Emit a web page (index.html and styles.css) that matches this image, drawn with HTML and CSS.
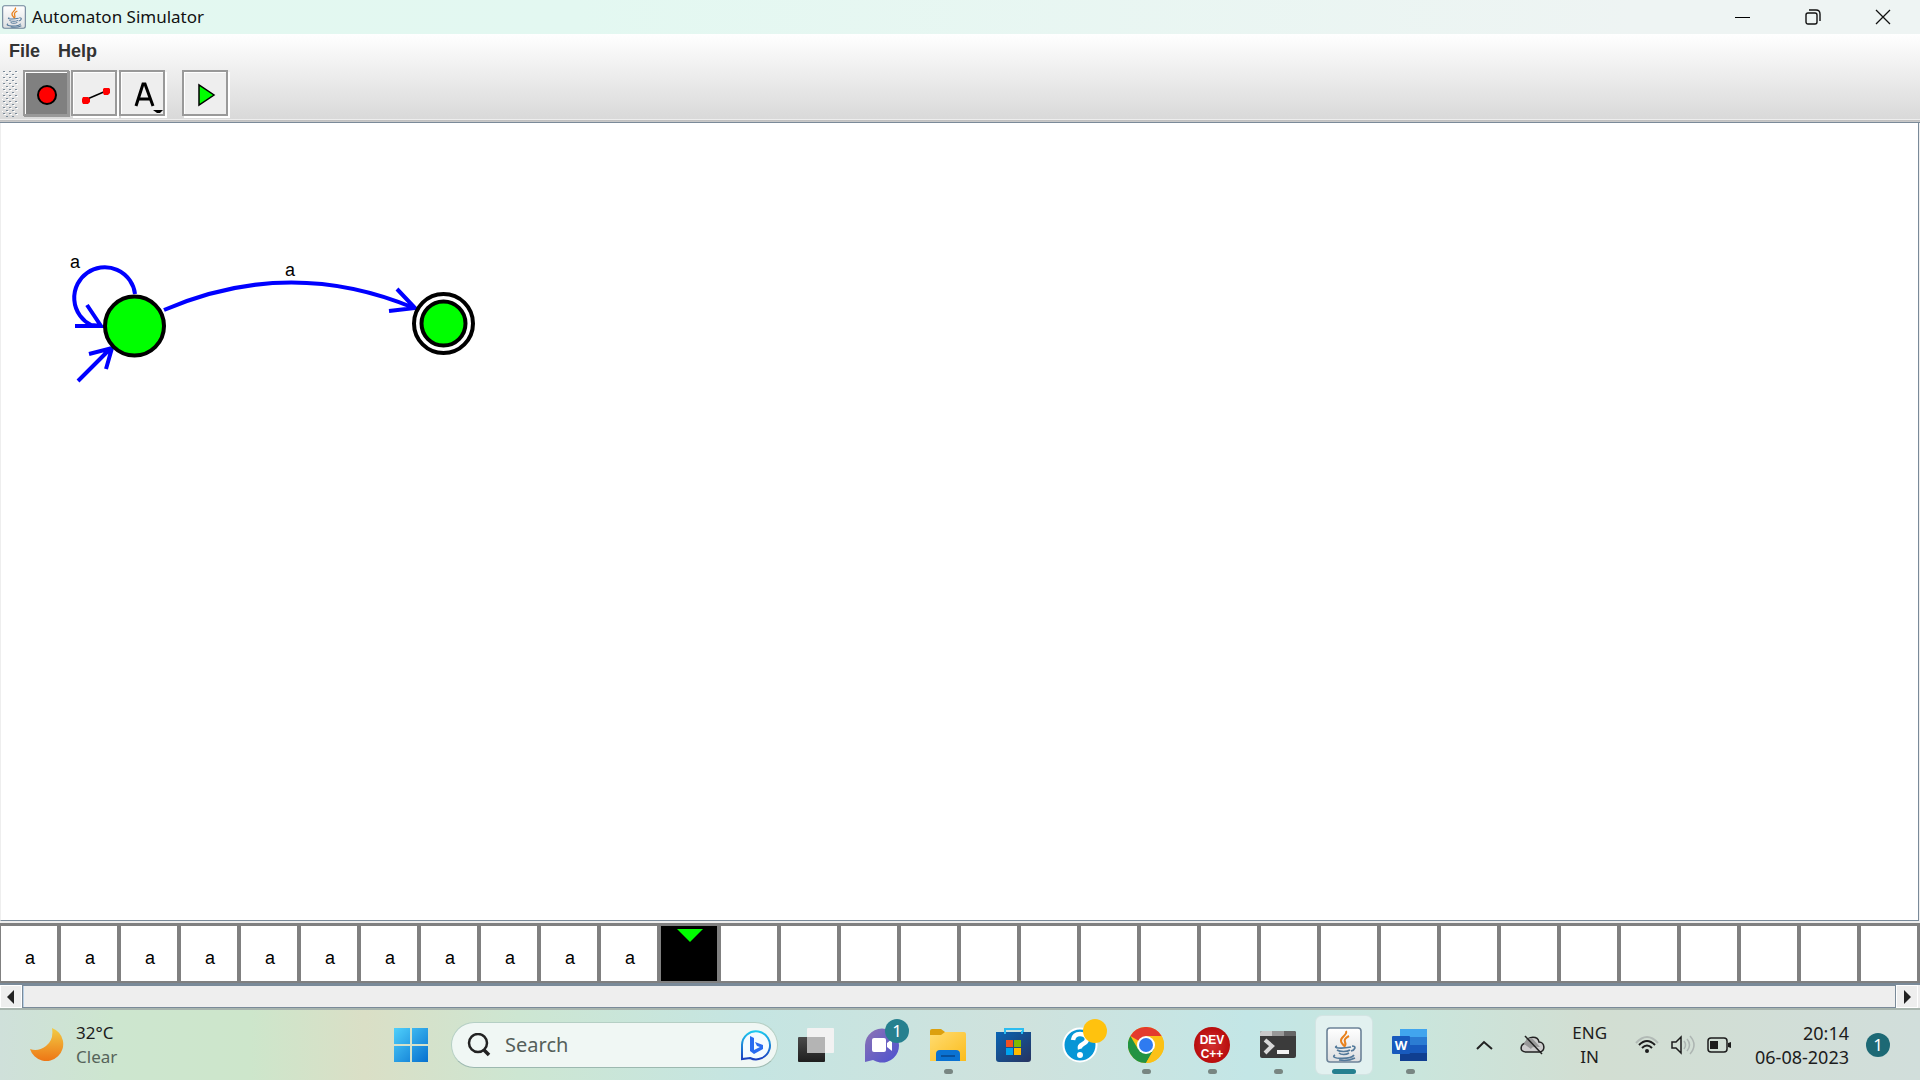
FILE: index.html
```html
<!DOCTYPE html>
<html lang="en">
<head>
<meta charset="utf-8">
<title>Automaton Simulator</title>
<link rel="stylesheet" href="styles.css">
</head>
<body>
<svg class="defs" aria-hidden="true">
  <defs>
    <linearGradient id="win" x1="0" y1="0" x2="1" y2="1"><stop offset="0" stop-color="#4fd0fb"/><stop offset="1" stop-color="#0670cf"/></linearGradient>
    <linearGradient id="moon" x1="0" y1="0" x2="0" y2="1"><stop offset="0" stop-color="#f2cc45"/><stop offset="1" stop-color="#ee7615"/></linearGradient>
    <linearGradient id="bing" x1="0" y1="0" x2="0" y2="1"><stop offset="0" stop-color="#1ec8ee"/><stop offset="1" stop-color="#1b3fc0"/></linearGradient>
    <linearGradient id="chat" x1="0" y1="0" x2="1" y2="1"><stop offset="0" stop-color="#8d74b4"/><stop offset="1" stop-color="#4b50d0"/></linearGradient>
    <linearGradient id="folder" x1="0" y1="0" x2="1" y2="1"><stop offset="0" stop-color="#ffdc72"/><stop offset="1" stop-color="#fbbc1c"/></linearGradient>
    <linearGradient id="store" x1="0" y1="0" x2="1" y2="1"><stop offset="0" stop-color="#0a64b4"/><stop offset="1" stop-color="#27335f"/></linearGradient>
    <linearGradient id="dark" x1="0" y1="0" x2="0" y2="1"><stop offset="0" stop-color="#4a4a4a"/><stop offset="1" stop-color="#1e1e1e"/></linearGradient>
    <linearGradient id="paper" x1="0" y1="0" x2="0" y2="1"><stop offset="0" stop-color="#fff"/><stop offset="1" stop-color="#dcdee0"/></linearGradient>
    <radialGradient id="dev"><stop offset="0" stop-color="#d23030"/><stop offset="1" stop-color="#b80c0c"/></radialGradient>
    <symbol id="java" viewBox="0 0 36 36">
      <rect x="1" y="1" width="34" height="34" rx="3" fill="url(#paper)" stroke="#6c8298" stroke-width="1.6"/>
      <path d="M20 4c2 4-6 6-5 10 0 2 2 3 3 5M23 9c-4 2-5 4-4 6s1 3-1 5" fill="none" stroke="#e8811c" stroke-width="2"/>
      <path d="M11 19c-5 2 4 3 14 1M11 23c3 2 10 2 13 0M13 26c2 2 7 2 10 0M9 28c-7 4 16 5 19 0M26 19c5 0 3 4-1 5M13 33c6 1 12 0 16-2" fill="none" stroke="#53799a" stroke-width="1.6"/>
    </symbol>
  </defs>
</svg>
<div class="screen">
  <header class="titlebar">
    <svg class="app-icon" viewBox="0 0 36 36" aria-hidden="true"><use href="#java"/></svg>
    <h1 class="title">Automaton Simulator</h1>
    <div class="window-buttons">
      <button class="winbtn" aria-label="Minimize"><svg width="16" height="16"><path d="M0 8.5h15" stroke="#000"/></svg></button>
      <button class="winbtn" aria-label="Restore"><svg width="16" height="16" fill="none" stroke="#111" stroke-width="1.4"><rect x="1" y="4" width="11" height="11" rx="2"/><path d="M4 1h7q4 0 4 4v7"/></svg></button>
      <button class="winbtn" aria-label="Close"><svg width="16" height="16"><path d="M1 1l14 14M15 1L1 15" stroke="#111" stroke-width="1.3"/></svg></button>
    </div>
  </header>

  <div class="chrome">
    <nav class="menubar">
      <button class="menu">File</button>
      <button class="menu">Help</button>
    </nav>
    <div class="toolbar" role="toolbar" aria-label="Tools">
      <svg class="grip" width="16" height="47" aria-hidden="true">
        <defs><pattern id="dots" width="6" height="6" patternUnits="userSpaceOnUse"><path d="M1 1h2v1H1zM4 4h2v1H4z" fill="#7a8a99"/><path d="M2 2h2v1H2zM5 5h1v1H5zM0 5h1v1H0z" fill="#fff"/></pattern></defs>
        <rect width="16" height="47" fill="url(#dots)"/>
      </svg>
      <button class="tool tool-on" aria-label="State" aria-pressed="true"><svg width="42" height="42"><circle cx="22" cy="21" r="9" fill="#f00" stroke="#000" stroke-width="2"/></svg></button>
      <button class="tool" aria-label="Transition"><svg width="42" height="42"><path d="M12 26L33 17" stroke="#000" stroke-width="1.500"/><path d="M10 23h5l2 2v3l-2 2h-5l-1-2v-3zM31 14h5l1 1v4l-2 2h-4l-1-2v-4z" fill="#f00"/></svg></button>
      <button class="tool" aria-label="Text"><svg width="42" height="42"><path d="M15 32L22 10h2l8 22M18 25h11" fill="none" stroke="#000" stroke-width="3"/><path d="M32 36h10l-3 3h-3z" fill="#000"/></svg></button>
      <button class="tool tool-run" aria-label="Run"><svg width="42" height="42"><path d="M15 11v20l15-10z" fill="#0f0" stroke="#000" stroke-width="1.500"/></svg></button>
    </div>
  </div>

  <main class="canvas">
    <svg class="diagram" width="600" height="400" role="img" aria-label="Automaton with two states">
      <g fill="none" stroke="#00f" stroke-width="4">
        <path d="M135 171A30.500 30.500 0 1 0 91 202L102 203M75 203h26L87 182"/>
        <path d="M78 258L111 225M89 231L112 225L106 246"/>
        <path d="M164 187Q289 133 414 185M389 188L415 185L397 166"/>
      </g>
      <g stroke="#000" stroke-width="4">
        <circle cx="134.500" cy="203" r="29.500" fill="#0f0"/>
        <circle cx="443.500" cy="200.500" r="29.500" fill="#fff"/>
        <circle cx="443.500" cy="200.500" r="22" fill="#0f0"/>
      </g>
      <text class="edge-label" x="70" y="145">a</text>
      <text class="edge-label" x="285" y="153">a</text>
    </svg>
  </main>

  <section class="tape" aria-label="Tape">
    <span class="cell">a</span><span class="cell">a</span><span class="cell">a</span><span class="cell">a</span><span class="cell">a</span><span class="cell">a</span><span class="cell">a</span><span class="cell">a</span><span class="cell">a</span><span class="cell">a</span><span class="cell">a</span><span class="cell head"><svg width="26" height="13"><path d="M0 0h26L13 13z" fill="#0f0"/></svg></span><span class="cell"></span><span class="cell"></span><span class="cell"></span><span class="cell"></span><span class="cell"></span><span class="cell"></span><span class="cell"></span><span class="cell"></span><span class="cell"></span><span class="cell"></span><span class="cell"></span><span class="cell"></span><span class="cell"></span><span class="cell"></span><span class="cell"></span><span class="cell"></span><span class="cell"></span><span class="cell"></span><span class="cell"></span><span class="cell"></span>
  </section>
  <div class="scrollbar">
    <button class="arrow" aria-label="Scroll left"><svg width="8" height="14"><path d="M7 0v14L0 7z" fill="#222"/></svg></button>
    <div class="thumb"></div>
    <button class="arrow" aria-label="Scroll right"><svg width="8" height="14"><path d="M1 0v14l7-7z" fill="#222"/></svg></button>
  </div>

  <footer class="taskbar">
    <div class="weather">
      <svg width="34" height="34" aria-hidden="true"><path d="M22 0A17 17 0 1 1 0 21Q8 24 16 18T22 0z" fill="url(#moon)"/></svg>
      <div><div>32°C</div><div class="muted">Clear</div></div>
    </div>
    <div class="dock">
      <button class="app start" aria-label="Start"><svg width="36" height="36"><path d="M1 1h16v16H1zM19 1h16v16H19zM1 19h16v16H1zM19 19h16v16H19z" fill="url(#win)"/></svg></button>
      <div class="search">
        <svg width="24" height="24" fill="none" stroke="#222" aria-hidden="true"><circle cx="11" cy="10" r="9" stroke-width="2.500"/><path d="M17 17l5 5" stroke-width="3.500"/></svg>
        <input class="search-box" type="text" placeholder="Search" aria-label="Search">
        <svg width="32" height="32" aria-hidden="true"><path d="M2 30V16A14 14 0 1 1 10 29z" fill="#f4fbff" stroke="url(#bing)" stroke-width="2"/><path d="M10 7l4 2v12l6-3-3-1-2-4 8 3v4l-9 5-4-3z" fill="#286bf0"/></svg>
      </div>
      <button class="app" aria-label="Task view"><svg width="36" height="36"><rect y="10" width="27" height="25" rx="1" fill="url(#dark)"/><rect x="9" y="1" width="27" height="25" rx="1" fill="#f2f2f2"/><path d="M9 10h18v16H9z" fill="#b4b4b4"/></svg></button>
      <button class="app" aria-label="Chat"><svg width="36" height="36"><path d="M1 35V18A17 17 0 1 1 9 33z" fill="url(#chat)"/><rect x="8" y="11" width="14" height="14" rx="2" fill="#fff"/><path d="M23 16l5-4v12l-5-4z" fill="#fff"/></svg><span class="badge">1</span></button>
      <button class="app" aria-label="File Explorer"><svg width="36" height="36"><path d="M0 4q0-2 2-2h9l4 3v6H0z" fill="#dca00f"/><path d="M0 8h11l4-3h19q2 0 2 2v27H0z" fill="url(#folder)"/><path d="M6 34v-7q0-4 4-4h16q4 0 4 4v7z" fill="#0a72d2"/><path d="M11 29h14" stroke="#07509c" stroke-width="2"/></svg><i class="dot"></i></button>
      <button class="app" aria-label="Microsoft Store"><svg width="36" height="36"><path d="M9 8V2h18v6" fill="none" stroke="#2bbcf0" stroke-width="2"/><path d="M0 5h35v27q0 3-3 3H3q-3 0-3-3z" fill="url(#store)"/><path d="M9 7V4M26 7V4" stroke="#2bbcf0" stroke-width="2"/><path d="M10 13h7v7h-7z" fill="#f25022"/><path d="M18 13h7v7h-7z" fill="#7fba00"/><path d="M10 21h7v7h-7z" fill="#00a4ef"/><path d="M18 21h7v7h-7z" fill="#ffb900"/></svg></button>
      <button class="app" aria-label="Get Help"><svg width="36" height="36"><circle cx="18" cy="18" r="16.500" fill="#0796d6" stroke="#fff" stroke-width="2"/><path d="M11 13q1-6 7-6t7 5q0 3-4 5t-3 5" fill="none" stroke="#fff" stroke-width="4.500"/><circle cx="18" cy="28" r="3" fill="#fff"/></svg><span class="badge badge-alert"></span></button>
      <button class="app" aria-label="Chrome"><svg width="36" height="36"><circle cx="18" cy="18" r="18" fill="#fbc116"/><path d="M18 18L2.400 9A18 18 0 0 1 33.600 9z" fill="#e33b2e"/><path d="M2.400 9A18 18 0 0 0 18 36L26 22 18 18 10 22z" fill="#229342"/><path d="M18 9h15.600A18 18 0 0 1 18 36L26 22z" fill="#fbc116"/><circle cx="18" cy="18" r="9" fill="#fff"/><circle cx="18" cy="18" r="7" fill="#2f7bf0"/></svg><i class="dot"></i></button>
      <button class="app" aria-label="Dev-C++"><svg width="36" height="36"><circle cx="18" cy="18" r="18" fill="url(#dev)"/><text class="dev-text" x="18" y="17">DEV</text><text class="dev-text" x="18" y="31">C++</text></svg><i class="dot"></i></button>
      <button class="app" aria-label="Command Prompt"><svg width="36" height="36"><rect y="4" width="36" height="27" rx="2" fill="#3b3b3b"/><path d="M0 9V6q0-2 2-2h10v5z" fill="#c9c9c9"/><path d="M12 4h12v5H12z" fill="#989898"/><path d="M24 4h10q2 0 2 2v3H24z" fill="#666"/><path d="M5 13l7 6-7 7" fill="none" stroke="#d8d8d8" stroke-width="4"/><path d="M17 23h12v4H17z" fill="#f2f2f2"/></svg><i class="dot"></i></button>
      <button class="app app-active" aria-label="Automaton Simulator"><svg width="36" height="36"><use href="#java"/></svg><i class="dot dot-active"></i></button>
      <button class="app" aria-label="Word"><svg width="36" height="36"><path d="M8 2h27v8H8z" fill="#41a5ee"/><path d="M8 10h27v8H8z" fill="#2b7cd3"/><path d="M8 18h27v8H8z" fill="#185abd"/><path d="M8 26h27v8H8z" fill="#103f91"/><rect y="9" width="18" height="18" rx="1" fill="#185abd"/><text class="word-text" x="9" y="23">W</text></svg><i class="dot"></i></button>
    </div>
    <div class="tray">
      <svg width="17" height="10" aria-hidden="true"><path d="M1 9l7-7 8 7" fill="none" stroke="#222" stroke-width="2"/></svg>
      <svg class="cloud" width="26" height="20" aria-hidden="true"><path d="M6 17C-1 17 0 9 6 8 8 0 18 1 19 7c6 0 7 10 0 10z" fill="#ccc" stroke="#222" stroke-width="1.500"/><path d="M4 9q2-7 8-6l8 9q-8-1-9 2z" fill="#999"/><path d="M5 1l17 18" stroke="#222" stroke-width="1.500"/></svg>
      <div class="lang"><div>ENG</div><div>IN</div></div>
      <svg class="wifi" width="24" height="20" fill="none" stroke="#1c1c1c" stroke-width="2" aria-hidden="true"><path d="M1 8q11-12 22 0" stroke="#b2bab6"/><path d="M4 10q8-8 16 0M7 13q5-5 10 0"/><circle cx="12" cy="16" r="2" fill="#1c1c1c" stroke="none"/></svg>
      <svg class="volume" width="24" height="20" fill="none" stroke="#1c1c1c" stroke-width="1.500" aria-hidden="true"><path d="M1 7h4l5-5v16l-5-5H1z"/><path d="M13 6q3 4 0 8M16 4q5 6 0 12M19 1q8 9 0 18" stroke="#adb5b2"/></svg>
      <svg width="24" height="16" aria-hidden="true"><rect x="1" y="1" width="19" height="14" rx="3" fill="none" stroke="#1c1c1c" stroke-width="1.500"/><path d="M3 4h8v8H3zM21 6l3-1v6l-3-1z" fill="#1c1c1c"/></svg>
      <div class="clock"><div>20:14</div><div>06-08-2023</div></div>
      <span class="notice">1</span>
    </div>
  </footer>
</div>
</body>
</html>
```
FILE: styles.css
```css
* { box-sizing: border-box; }
body { margin: 0; font-family: "Noto Sans", "Open Sans", sans-serif; color: #1c1c1c; }
button { padding: 0; border: 0; background: none; font: inherit; color: inherit; }
svg { display: block; flex: none; }
.defs { position: absolute; width: 0; height: 0; }
.screen { display: flex; flex-direction: column; height: 100vh; overflow: hidden; background: #eee; }

.titlebar { display: flex; align-items: center; flex: none; height: 34px; padding: 0 2px; background: linear-gradient(90deg, #e3f8f0, #e3f8f1 30%, #eef4f3 85%); }
.app-icon { width: 24px; height: 24px; }
.title { margin: 0 0 0 6px; font-size: 17px; line-height: 24px; font-weight: 400; color: #111; }
.window-buttons { display: flex; margin-left: auto; }
.winbtn { display: grid; place-items: center; width: 70px; height: 34px; }

.chrome { flex: none; height: 89px; background: linear-gradient(#fff, #d9d9d9 85px, #eee 85px, #eee 86px, #bbb 86px, #ccc 88px, #7a8a99 88px); }
.menubar { display: flex; align-items: flex-start; gap: 18px; height: 36px; padding-left: 9px; font: bold 18px/34px "Liberation Sans", Arial, sans-serif; color: #333; }
.toolbar { display: flex; padding-left: 2px; }
.grip { margin-right: 5px; }
.tool { width: 46px; height: 46px; margin-right: 2px; padding-top: 2px; border: 2px solid #999; background: #eee; box-shadow: inset 1px 1px #fff, 2px 2px #fff; }
.tool-on { background: #808080; box-shadow: inset 1px 1px #fff, 1px 1px #999; }
.tool-run { margin-left: 15px; }

.canvas { flex: 1; min-height: 0; background: #fff; border: solid #7a8a99; border-width: 0 1px 1px 0; border-left: 1px solid #eee; margin-right: 1px; overflow: hidden; }
.diagram { margin-left: -1px; }
.edge-label { font: 18px "Liberation Sans", Arial, sans-serif; fill: #000; }

.tape { display: flex; flex: none; height: 60px; margin-top: 2px; padding: 3px 0 2px 1px; background: #808080; overflow: hidden; }
.cell { flex: none; width: 60px; border-right: 4px solid #808080; background: #fff; color: #000; text-align: center; font: 18px/64px "Liberation Sans", Arial, sans-serif; padding-left: 2px; }
.head { display: flex; justify-content: center; padding-top: 3px; background: #000; }

.scrollbar { display: flex; flex: none; height: 27px; padding-right: 2px; border-top: 2px solid #7a8a99; border-bottom: 2px solid #a8b5ae; }
.arrow { display: grid; place-items: center; width: 22px; border: 1px solid #fff; background: #eee; }
.thumb { flex: 1; border: solid #b8cfe5; border-width: 1px 0 1px 2px; outline: 1px solid #7a8a99; outline-offset: -1px; background: #eee; }

.taskbar { display: grid; grid-template-columns: 394fr auto 483fr; align-items: center; flex: none; height: 70px; font-size: 17px; line-height: 24px; white-space: nowrap; padding-bottom: 1px; background: linear-gradient(90deg, #cfe0da 0, #cde6cf 6%, #cde6cb 13%, #dadfc6 19%, #cde6d2 27%, #c5e5e2 39%, #cfe2dd 53%, #c3e6e6 65%, #c9e6dd 73%, #d2ded2 83%, #d1dedb 100%); }
.weather { display: flex; align-items: center; gap: 12px; padding-left: 30px; }
.muted { color: #56645a; }
.dock { display: flex; align-items: center; gap: 10px; }
.app { position: relative; display: grid; place-items: center; width: 56px; height: 58px; border-radius: 6px; }
.app-active { background: #e2f1f0; box-shadow: 0 0 0 1px #d3e4e3; }
.start { width: 36px; }
.search { display: flex; align-items: center; width: 327px; height: 46px; margin-left: 12px; padding: 0 5px 0 15px; border: 1px solid #b5cfc4; border-bottom-color: #9db9b0; border-radius: 23px; background: #f0f7f4; }
.search-box { flex: 1; min-width: 0; margin-left: 14px; padding: 0; border: 0; outline: 0; background: none; font: 20px/28px "Noto Sans", sans-serif; }
.search-box::placeholder { color: #555f5a; opacity: 1; }
.badge { position: absolute; top: 3px; right: 1px; width: 24px; height: 24px; border-radius: 12px; background: #26808f; color: #fff; line-height: 24px; text-align: center; }
.badge-alert { background: #ffc20e; }
.dot { position: absolute; left: 50%; bottom: 0; width: 9px; height: 5px; margin-left: -4px; border-radius: 3px; background: #788682; }
.dot-active { width: 24px; margin-left: -12px; background: #26808f; }
.dev-text { font: bold 12px "Liberation Sans", Arial, sans-serif; fill: #fff; text-anchor: middle; }
.word-text { font: bold 13px "Open Sans", sans-serif; fill: #fff; text-anchor: middle; }
.tray { display: flex; align-items: center; justify-content: flex-end; padding-right: 30px; }
.cloud { margin-left: 27px; }
.lang { margin-left: 26px; text-align: center; }
.wifi { margin-left: 28px; }
.volume { margin: 0 12px; }
.clock { margin-left: 24px; font-size: 18px; text-align: right; }
.notice { width: 24px; height: 24px; margin-left: 17px; border-radius: 12px; background: #1d6975; color: #fff; text-align: center; }
```
